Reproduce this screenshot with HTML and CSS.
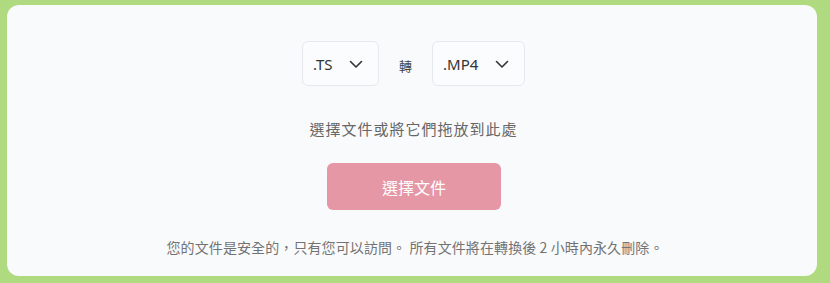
FILE: index.html
```html
<!DOCTYPE html>
<html lang="zh-TW">

<head>
	<meta charset="UTF-8">
	<title>TS 轉 MP4</title>
	<link rel="stylesheet" href="styles.css">
</head>

<body>
	<!-- 轉換卡片 -->
	<div class="card">
		<div class="format-row">
			<div class="select select-from">
				<span>.TS</span>
				<svg class="chevron" viewBox="0 0 16 16" width="16" height="16"><path d="M2.5 5.5 8 11l5.5-5.5" fill="none" stroke="#333" stroke-width="1.6" stroke-linecap="round" stroke-linejoin="round"/></svg>
			</div>
			<div class="to">轉</div>
			<div class="select select-to">
				<span>.MP4</span>
				<svg class="chevron" viewBox="0 0 16 16" width="16" height="16"><path d="M2.5 5.5 8 11l5.5-5.5" fill="none" stroke="#333" stroke-width="1.6" stroke-linecap="round" stroke-linejoin="round"/></svg>
			</div>
		</div>
		<div class="drop-hint">選擇文件或將它們拖放到此處</div>
		<a href="#" class="choose-btn">選擇文件</a>
		<div class="note">您的文件是安全的，只有您可以訪問。 所有文件將在轉換後 2 小時內永久刪除。</div>
	</div>
</body>

</html>
```

FILE: styles.css
```css
* {
	margin: 0;
	padding: 0;
	box-sizing: border-box;
}

html,
body {
	width: 100%;
	height: 100%;
}

body {
	background-color: #afda80;
	font-family: "Noto Sans", "Noto Sans CJK TC", sans-serif;
	padding: 5px 13px 7px 7px;
}

a {
	text-decoration: none;
}

/* 卡片 */
.card {
	height: 271px;
	background-color: #f9fafc;
	border-radius: 12px;
	display: flex;
	flex-direction: column;
	align-items: center;
	padding-top: 36px;
}

/* 格式選擇 */
.format-row {
	display: flex;
	align-items: center;
	margin-left: 3px;
}

.select {
	height: 45px;
	display: flex;
	align-items: center;
	justify-content: space-between;
	background-color: #fbfcfd;
	border: 1px solid #e6e8ec;
	border-radius: 6px;
	color: #333;
	font-size: 15px;
	padding: 0 14px 0 10px;
}

.select-from {
	width: 77px;
}

.select-to {
	width: 93px;
}

.to {
	width: 53px;
	text-align: center;
	font-size: 13px;
	color: #444;
	font-family: "Noto Sans CJK TC", sans-serif;
	padding-top: 4px;
}

.drop-hint {
	margin-top: 32px;
	font-size: 15px;
	letter-spacing: 1px;
	color: #666;
	font-family: "Noto Sans CJK TC", sans-serif;
	margin-left: 3px;
}

.choose-btn {
	margin-top: 24px;
	margin-left: 4px;
	width: 174px;
	height: 47px;
	display: flex;
	justify-content: center;
	align-items: center;
	background-color: #e597a6;
	border-radius: 6px;
	color: #fff;
	font-size: 16px;
	font-family: "Noto Sans CJK TC", sans-serif;
}

.note {
	margin-top: 27px;
	margin-left: 6px;
	font-size: 14px;
	letter-spacing: 0.1px;
	color: #737373;
	font-family: "Noto Sans CJK TC", sans-serif;
}
```
